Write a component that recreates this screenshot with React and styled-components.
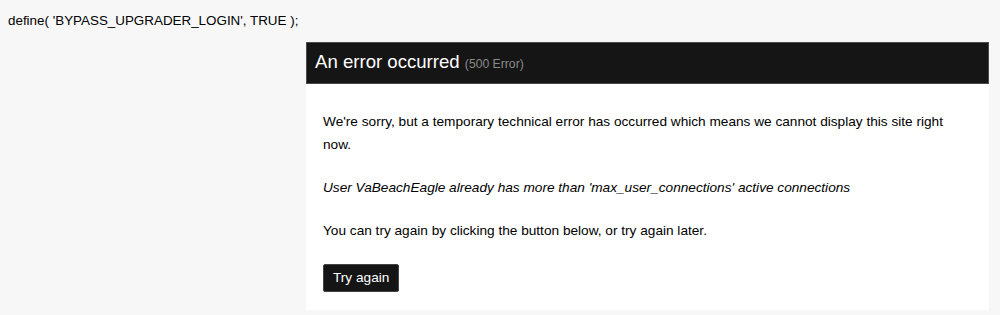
import styled, { createGlobalStyle } from "styled-components";

const GlobalStyle = createGlobalStyle`
  html, body {
    margin: 0;
    background: #f7f7f7;
  }
  body {
    padding: 8px;
    font-family: "Liberation Sans", Arial, sans-serif;
    color: #000;
  }
`;

const Define = styled.div`
  font-size: 13.4px;
  line-height: 22px;
  padding-top: 2px;
`;

const Wrap = styled.div`
  display: flex;
  padding-left: 298px;
  margin-top: 10px;
`;

const Box = styled.div`
  width: 683px;
  background: #fff;
`;

const Header = styled.h1`
  margin: 0;
  background: #151515;
  border: 1px solid #4a4a4a;
  color: #fff;
  font-size: 18.6px;
  font-weight: normal;
  line-height: 37px;
  padding: 0 8px;
`;

const Code = styled.span`
  color: #8a8a8a;
  font-size: 12.2px;
`;

const Body = styled.div`
  padding: 26px 17px 18px;
  font-size: 13.65px;
  line-height: 23px;
`;

const Para = styled.p`
  margin: 0 0 ${(p) => p.$gap}px;
  font-style: ${(p) => (p.$italic ? "italic" : "normal")};
`;

const Button = styled.button`
  display: inline-block;
  background: #151515;
  color: #fff;
  border: 1px solid #444;
  border-radius: 2px;
  font-family: inherit;
  font-size: 13.65px;
  padding: 6px 9px;
  line-height: 14px;
  cursor: pointer;
`;

export default function App() {
  return (
    <>
      <GlobalStyle />
      <Define>define( 'BYPASS_UPGRADER_LOGIN', TRUE );</Define>
      <Wrap>
        <Box>
          <Header>
            An error occurred <Code>(500 Error)</Code>
          </Header>
          <Body>
            <Para $gap={20}>
              We're sorry, but a temporary technical error has occurred which
              means we cannot display this site right now.
            </Para>
            <Para $italic $gap={20}>
              User VaBeachEagle already has more than 'max_user_connections'
              active connections
            </Para>
            <Para $gap={22}>
              You can try again by clicking the button below, or try again later.
            </Para>
            <Button>Try again</Button>
          </Body>
        </Box>
      </Wrap>
    </>
  );
}
